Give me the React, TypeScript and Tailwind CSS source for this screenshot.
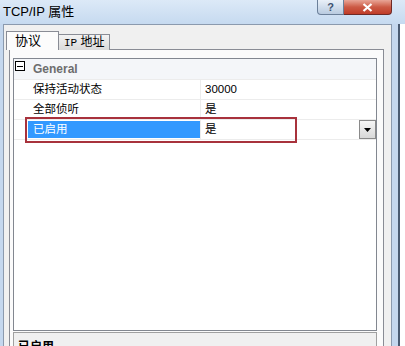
import React from "react";

const FONT = "font-['Liberation_Sans','Noto_Sans_CJK_SC',sans-serif]";

function TitleBar() {
  return (
    <div className="h-[24px] flex items-start bg-gradient-to-b from-[#dce9f7] to-[#c6daf0]">
      <div className="pl-[3px] pt-[4px] text-[13px] leading-[16px] text-black">TCP/IP 属性</div>
      <div className="ml-auto mr-[13px] flex">
        <div className="w-[27px] h-[15px] rounded-bl-[4px] border border-t-0 border-[#6b7f99] bg-gradient-to-b from-[#e9f0f8] to-[#b9cbe0] flex items-center justify-center text-[11px] font-bold leading-none text-[#3e5270]">
          ?
        </div>
        <div className="w-[48px] h-[15px] rounded-br-[4px] border border-t-0 border-l-0 border-[#6e2a26] bg-gradient-to-b from-[#e8a597] via-[#cc5a45] to-[#c03c28] flex items-center justify-center">
          <svg width="11" height="9" viewBox="0 0 11 9">
            <path d="M1.5 1 L9.5 8 M9.5 1 L1.5 8" stroke="#ffffff" strokeWidth="2.2" />
          </svg>
        </div>
      </div>
    </div>
  );
}

function Row({ label, value, selected }: { label: string; value: string; selected?: boolean }) {
  return (
    <div className="flex h-[20px] border-t border-[#ececec]">
      <div className="w-[14px]" />
      <div className={`w-[172px] pl-[5px] flex items-center text-[11.5px] ${selected ? "bg-[#3399ff] text-white mt-px mb-px" : "text-black"}`}>
        {label}
      </div>
      <div className="w-px bg-[#ececec]" />
      <div className="flex-1 pl-[4px] flex items-center text-[11.5px] text-black">{value}</div>
      {selected && (
        <div className="w-[17px] h-[19px] border border-[#8a8a8a] bg-gradient-to-b from-[#f6f6f6] to-[#d8d8d8] flex items-center justify-center">
          <svg width="7" height="4" viewBox="0 0 7 4">
            <path d="M0 0 L7 0 L3.5 4 Z" fill="#000" />
          </svg>
        </div>
      )}
    </div>
  );
}

function PropertyGrid() {
  return (
    <div className="relative w-[364px] h-[273px] border border-[#828790] bg-white">
      <div className="flex h-[20px] bg-[#f4f6f9]">
        <div className="w-[14px] pl-px pt-[2px]">
          <div className="w-[10px] h-[10px] border border-black bg-white flex items-center justify-center">
            <div className="w-[6px] h-px bg-black" />
          </div>
        </div>
        <div className="pl-[5px] flex items-center text-[12px] font-bold text-[#6d6d6d]">General</div>
      </div>
      <Row label="保持活动状态" value="30000" />
      <Row label="全部侦听" value="是" />
      <Row label="已启用" value="是" selected />
      <div className="border-t border-[#ececec]" />
      {/* red annotation box */}
      <div className="absolute left-[11px] top-[58px] w-[272px] h-[26px] border-2 border-[#a8323c]" />
    </div>
  );
}

export default function App() {
  return (
    <div className={`w-[405px] h-[346px] overflow-hidden bg-[#c4d7ee] flex flex-col ${FONT}`}>
      <TitleBar />
      <div className="flex flex-1 min-h-0">
        <div className="w-[3px]" />
        <div className="w-[389px] border-l border-t border-r border-[#8b9aae] bg-[#f0f0f0] pl-[2px] pt-[6px]">
          {/* tabs */}
          <div className="flex items-start h-[19px] relative z-10">
            <div className="w-[53px] h-[19px] border border-b-0 border-[#898c95] bg-[#fcfcfc] pl-[8px] pt-[1px] text-[13px] leading-[16px] text-black">
              协议
            </div>
            <div className="mt-[3px] w-[51px] h-[16px] border border-l-0 border-b-0 border-[#898c95] bg-gradient-to-b from-[#f3f3f3] to-[#dadada] pl-[5px] text-[12px] leading-[15px] text-black">
              <span className="font-['Liberation_Mono',monospace] text-[11px]">IP</span> 地址
            </div>
          </div>
          {/* tab page */}
          <div className="ml-[3px] -mt-px w-[375px] h-[400px] border border-[#898c95] bg-[#fbfbfb] pl-[3px] pt-[8px]">
            <PropertyGrid />
            <div className="mt-[1px] w-[364px] h-[30px] border border-[#a0a0a0] bg-[#f0f0f0] pl-[4px] pt-[5px] text-[12px] font-bold text-black">
              已启用
            </div>
          </div>
        </div>
        <div className="w-[6px] bg-[#c4d7ee]" />
        <div className="w-[2px] bg-[#4a5b72]" />
        <div className="flex-1 bg-white" />
      </div>
    </div>
  );
}
